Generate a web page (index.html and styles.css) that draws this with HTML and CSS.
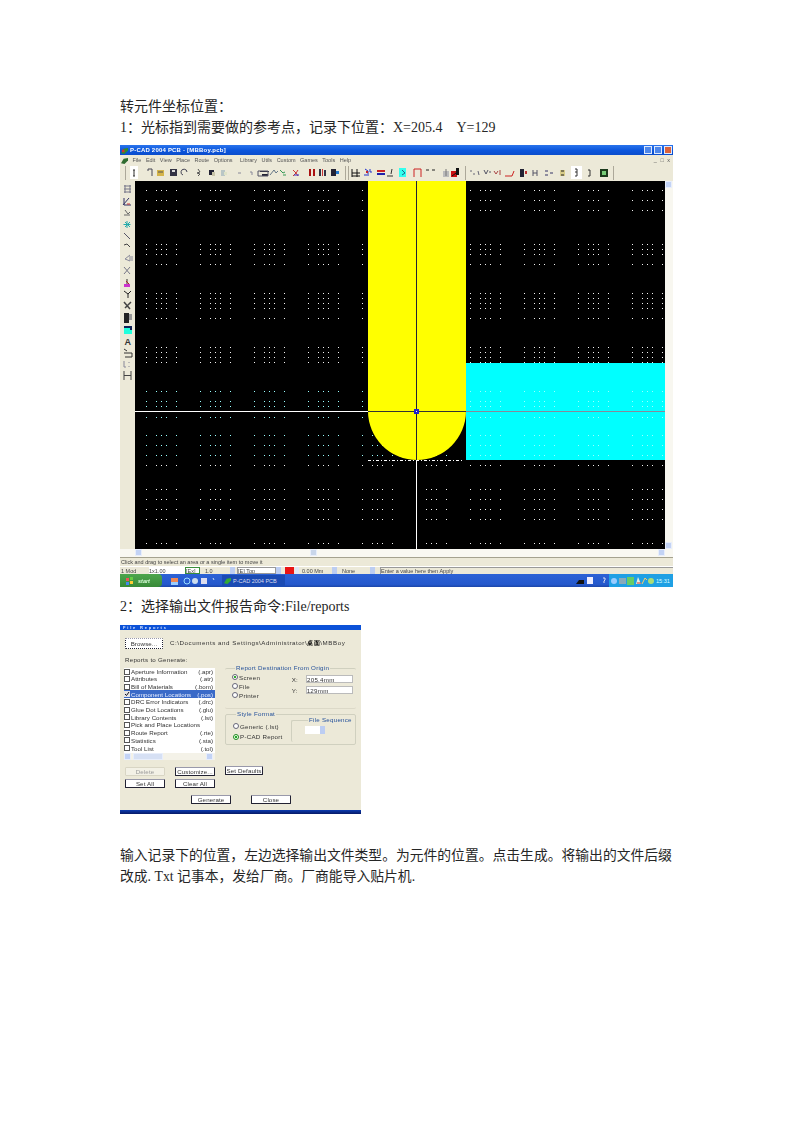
FILE: index.html
```html
<!DOCTYPE html>
<html lang="zh">
<head>
<meta charset="utf-8">
<title>转元件坐标位置</title>
<link rel="stylesheet" href="styles.css">
</head>
<body>
<main class="page">
  <p class="line">转元件坐标位置：</p>
  <p class="line">1：光标指到需要做的参考点，记录下位置：X=205.4&nbsp;&nbsp;&nbsp;&nbsp;Y=129</p>

  <section class="shot">
    <div class="titlebar">
      <svg class="appicon" viewBox="0 0 8 8"><path d="M0 7L3 2L8 1V4L4 8Z" fill="#2e8b2e"/><path d="M1 3H4V6H1Z" fill="#c33"/></svg>
      <span class="titletext">P-CAD 2004 PCB - [MBBoy.pcb]</span>
      <span class="winbtns"><i class="wb"></i><i class="wb"></i><i class="wb wb-close"></i></span>
    </div>
    <div class="menubar">
      <svg class="appicon" viewBox="0 0 8 8"><path d="M0 7L3 2L8 1V4L4 8Z" fill="#2e6b2e"/></svg>
      <span>File</span><span>Edit</span><span>View</span><span>Place</span><span>Route</span><span>Options</span><span class="menu-gap">Library</span><span>Utils</span><span>Custom</span><span>Games</span><span>Tools</span><span>Help</span>
      <span class="menu-right">_ &#9633; x</span>
    </div>
    <svg class="toolbar" viewBox="120 165 553 16">
      <path d="M125.500 166V180M345.500 166V180M348.500 166V180M465.500 166V180M613.500 166V180" stroke="#aca899"/>
      <rect x="130" y="166" width="8" height="13" fill="#fff"/>
      <rect x="571" y="166" width="11" height="13" fill="#fff"/>
      <path d="M133 170h2M134 170v6M133 176h2" stroke="#333" fill="none"/>
      <path d="M575 169h2v3h-2M577 172v4h-2M588 170h2v6h-2" stroke="#333" fill="none"/>
      <path d="M148 169h4v7M148 169v2" stroke="#445" fill="none"/>
      <path d="M157 170h7v6h-7z" fill="#d4b44a"/><path d="M158 172h5" stroke="#555"/>
      <path d="M170 169h7v7h-7z" fill="#334"/><path d="M172 170h3v2h-3z" fill="#ddd"/>
      <path d="M183 175a3 3 0 1 1 4-3" stroke="#445" fill="none"/>
      <path d="M198 169l2 3l-3 1l3 1l-2 2" stroke="#555" fill="none"/>
      <path d="M209 170h5v5h-5z" fill="#223"/><path d="M212 172h3v4h-3z" fill="#c8c4a8"/>
      <path d="M221 170h4v6h-4z" fill="#b9c6c6"/><path d="M224 172h3v3h-3z" fill="#dfe3c8"/>
      <path d="M238 173h3M250 172h2v3" stroke="#889" fill="none"/>
      <path d="M260 171h9v1h-9zM262 174h6v2h-6z" fill="#223"/><path d="M258 171h10v5h-10z" fill="none" stroke="#556"/>
      <path d="M270 175l4-5l2 3l2-2" stroke="#678" fill="none"/>
      <path d="M280 170l3 3l2-1M283 175h3" stroke="#395" fill="none"/>
      <path d="M293 170l3 3l-3 3M298 170l-2 3l2 3" stroke="#c33" fill="none"/><path d="M294 175h5" stroke="#33c"/>
      <path d="M309 169h2v7h-2zM313 169h2v7h-2z" fill="#a11"/>
      <path d="M319 169h2v7h-2zM324 170h2v6h-2z" fill="#334"/><path d="M322 169h1v7h-1z" fill="#c33"/>
      <path d="M331 169h5v7h-5z" fill="#223"/><path d="M336 171h3v3h-3z" fill="#27c"/>
      <path d="M352 169v8M352 173h8M357 169v8M352 176h8" stroke="#111" fill="none"/>
      <path d="M365 169l3 2v3M370 169v3h2M364 175h5" stroke="#23c" fill="none"/><path d="M366 171h2v2h-2z" fill="#c22"/>
      <path d="M377 170h8v2h-8z" fill="#c22"/><path d="M377 173h8v2h-8z" fill="#22a"/>
      <path d="M392 169l-1 5M387 176h6" stroke="#333" fill="none"/>
      <rect x="399" y="168" width="7" height="9" fill="#3fe"/><path d="M402 170l3 3l-3 2" stroke="#268" fill="none"/>
      <path d="M414 169h7v8M414 169v8" stroke="#c22" fill="none"/>
      <path d="M426 170h3M432 170h3" stroke="#222" fill="none"/>
      <path d="M443 171h6v6h-6z" fill="#bbb"/><path d="M446 169v7" stroke="#777"/>
      <path d="M451 171h6v6h-6z" fill="#c11"/><path d="M456 168h3v7h-3z" fill="#111"/><path d="M452 176l4-3" stroke="#111"/>
      <path d="M471 170v2M474 173v2M478 171l1 4" stroke="#667" fill="none"/>
      <path d="M484 170l2 4l2-4M489 172h2" stroke="#556" fill="none"/>
      <path d="M494 171l2 3l2-3M500 170v5" stroke="#a44" fill="none"/>
      <path d="M505 176h7l2-5" stroke="#c22" fill="none"/>
      <path d="M520 169h4v8h-4z" fill="#223"/><path d="M525 171h2v3h-2z" fill="#b33"/>
      <path d="M533 170v6M537 170v6M533 173h4" stroke="#556" fill="none"/>
      <path d="M545 171h3M545 175h3M550 173h3" stroke="#336" fill="none"/>
      <path d="M560 170h5v6h-5z" fill="#d8cc88"/><path d="M561 171h3M561 175h3" stroke="#222"/>
      <path d="M600 169h8v8h-8z" fill="#1c3a1c"/><path d="M602 171h4v4h-4z" fill="#7c7"/>
    </svg>
    <div class="work">
      <svg class="sidebar" viewBox="120 181 15 368">
        <path d="M124 186h7M124 189h7M124 192h7M125 185v8M130 185v8" stroke="#778" fill="none"/>
        <path d="M123 205l6-7M124 198v7h7" stroke="#336" fill="none"/><path d="M127 204h3" stroke="#c33"/>
        <path d="M125 210l3 4l2-2M124 215h6" stroke="#666" fill="none"/>
        <path d="M127 221v7M123.500 224.500h7M125 222l5 5M130 222l-5 5" stroke="#2aa" fill="none"/>
        <path d="M124 233l6 6" stroke="#556"/>
        <path d="M124 245l3-1l3 3" stroke="#444" fill="none"/>
        <path d="M130 255l-5 4l5 2v-5M132 256v5" stroke="#889" fill="none"/>
        <path d="M124 267l6 7M130 267l-6 7" stroke="#778" fill="none"/>
        <path d="M127 279v5" stroke="#333"/><path d="M124 284h6v3h-6z" fill="#c3c"/><path d="M126 281l3 3" stroke="#a22"/>
        <path d="M124 291l4 3l3-3M128 294v4" stroke="#222" fill="none"/>
        <path d="M124 302l6 7M125 308l6-6" stroke="#444" fill="none" stroke-width="1.500"/>
        <path d="M124 313h5v10h-5z" fill="#222"/><path d="M129 314h3v6h-3z" fill="#999"/>
        <path d="M124 326h8v8h-8z" fill="#2fd"/><path d="M124 326h8v2h-8zM130 326h2v4h-2z" fill="#125"/>
        <text class="side-a" x="124.500" y="345">A</text>
        <path d="M124 349l3 2M124 353h8v4h-7" stroke="#333" fill="none"/>
        <path d="M124 361v6h2M129 362v1M129 366v1" stroke="#889" fill="none"/>
        <path d="M124 371v9M131 371v9M124 375.500h7" stroke="#444" fill="none"/>
      </svg>
      <svg class="canvas" viewBox="0 0 530 368">
        <rect width="530" height="368" fill="#000"/>
        <g class="dots">
          <path d="M11 9.500H530M11 19.500H530M11 29.500H530M11 63.500H530M11 68.500H530M11 73.500H530M11 83.500H530M11 112.500H530M11 117.500H530M11 122.500H530M11 127.500H530M11 137.500H530M11 166.500H530M11 171.500H530M11 176.500H530M11 181.500H530M11 210.500H530M11 220.500H530M11 225.500H530M11 236.500H530M11 254.500H530M11 264.500H530M11 274.500H530M11 284.500H530M11 308.500H530M11 318.500H530M11 328.500H530M11 338.500H530M11 362.500H530"/>
        </g>
        <rect x="331" y="182" width="199" height="97" fill="#0ff"/>
        <g class="dots dots-faint">
          <path d="M11 210.500H530M11 220.500H530M11 225.500H530M11 236.500H530M11 254.500H530M11 264.500H530M11 274.500H530"/>
        </g>
        <path d="M233 0H331V230A49 49 0 0 1 233 230Z" fill="#ff0"/>
        <path class="edge" d="M233 279.500H329"/>
        <path d="M0 230.500H233" stroke="#fff"/>
        <path d="M233 230.500H331" stroke="#333"/>
        <path d="M331 230.500H530" stroke="#889"/>
        <path d="M281.500 0V279" stroke="#223"/>
        <path d="M281.500 279V368" stroke="#fff"/>
        <rect x="279" y="228" width="5" height="5" fill="#22c"/>
        <rect x="281" y="230" width="1" height="1" fill="#fff"/>
      </svg>
      <div class="vscroll"><i class="sb"></i><i class="sb"></i></div>
    </div>
    <div class="hscroll"><i class="sb"></i><i class="sb sb-mid"></i><i class="sb sb-end"></i></div>
    <div class="statusbar"><span>Click and drag to select an area or a single item to move it</span></div>
    <div class="propbar">
      <span class="pf pf-a">1 Mod</span>
      <span class="pf pf-b">1x1.00</span>
      <span class="pf pf-c">[Ex]</span>
      <span class="pf pf-d">1.0</span><i class="combo"></i>
      <span class="pf pf-e">[E] Top</span><i class="combo"></i>
      <i class="swatch"></i><i class="spin"></i>
      <span class="pf pf-f">0.00 Mm</span><i class="combo"></i>
      <span class="pf pf-g">None</span><i class="combo"></i>
      <span class="pf pf-h">Enter a value here then Apply</span>
    </div>
    <div class="taskbar">
      <span class="start"><svg class="flag" viewBox="0 0 8 8"><path d="M0 1h3v3H0z" fill="#e55"/><path d="M4 0h3v3H4z" fill="#6c4"/><path d="M0 5h3v3H0z" fill="#48e"/><path d="M4 4h3v3H4z" fill="#fc3"/></svg>start</span>
      <svg class="quick" viewBox="0 0 50 12">
        <rect x="2" y="3" width="7" height="4" fill="#e85"/><rect x="2" y="7" width="7" height="3" fill="#9cf"/>
        <circle cx="18" cy="6" r="3" fill="none" stroke="#9df"/><circle cx="26" cy="6" r="3" fill="#cde"/>
        <rect x="32" y="3" width="6" height="6" fill="#dde"/><path d="M44 3l1 2" stroke="#cde"/>
      </svg>
      <span class="task"><svg class="appicon" viewBox="0 0 8 8"><path d="M0 7L3 2L8 1V4L4 8Z" fill="#3a3"/></svg>P-CAD 2004 PCB</span>
      <span class="tray-icons">
        <svg class="trayleft" viewBox="0 0 30 12"><path d="M0 9l3-4h5v4z" fill="#111"/><rect x="11" y="2" width="6" height="7" fill="#eef"/><path d="M27 3h2v2l-1 1v2" stroke="#dde" fill="none"/></svg>
      </span>
      <span class="tray">
        <svg class="trayicons" viewBox="0 0 44 12"><circle cx="4" cy="6" r="3" fill="#9cf"/><rect x="9" y="3" width="7" height="6" fill="#8ab"/><rect x="17" y="2" width="7" height="8" fill="#6c6"/><path d="M26 9l2-7l3 7z" fill="#eed"/><path d="M27 8h4" stroke="#c33"/><path d="M32 9l3-6l2 2" stroke="#fc6" fill="none"/><circle cx="41" cy="6" r="3" fill="#ad7"/></svg>
        <span class="clock">15:31</span>
      </span>
    </div>
  </section>

  <p class="line line-caption">2：选择输出文件报告命令:File/reports</p>

  <section class="dialog">
    <div class="dlg-title">File Reports</div>
    <div class="dlg-top">
      <span class="btn btn-browse">Browse...</span>
      <span class="dlg-path">C:\Documents and Settings\Administrator\<b class="dark">桌面</b>\MBBoy</span>
    </div>
    <div class="dlg-main">
      <div class="dlg-left">
        <div class="dlg-label">Reports to Generate:</div>
        <div class="listbox">
          <div class="li"><i class="cb"></i><span>Aperture Information</span><b>(.apr)</b></div>
          <div class="li"><i class="cb"></i><span>Attributes</span><b>(.atr)</b></div>
          <div class="li"><i class="cb"></i><span>Bill of Materials</span><b>(.bom)</b></div>
          <div class="li li-on"><svg class="cb cb-on" viewBox="0 0 6 6"><path d="M1 3l1.500 1.500L5 1" stroke="#112" fill="none"/></svg><span>Component Locations</span><b>(.pos)</b></div>
          <div class="li"><i class="cb"></i><span>DRC Error Indicators</span><b>(.drc)</b></div>
          <div class="li"><i class="cb"></i><span>Glue Dot Locations</span><b>(.glu)</b></div>
          <div class="li"><i class="cb"></i><span>Library Contents</span><b>(.lst)</b></div>
          <div class="li"><i class="cb"></i><span>Pick and Place Locations</span><b></b></div>
          <div class="li"><i class="cb"></i><span>Route Report</span><b>(.rte)</b></div>
          <div class="li"><i class="cb"></i><span>Statistics</span><b>(.sta)</b></div>
          <div class="li"><i class="cb"></i><span>Tool List</span><b>(.tol)</b></div>
          <div class="list-scroll"><i class="sb"></i><i class="sb sb-thumb"></i><i class="sb sb-end"></i></div>
        </div>
      </div>
      <div class="dlg-right">
        <fieldset class="grp grp-dest">
          <legend>Report Destination  From Origin</legend>
          <div class="radios">
            <label class="rd"><i class="radio radio-on"></i>Screen</label>
            <label class="rd"><i class="radio"></i>File</label>
            <label class="rd"><i class="radio"></i>Printer</label>
          </div>
          <div class="coords">
            <label class="co">X:<span class="input">205.4mm</span></label>
            <label class="co">Y:<span class="input">129mm</span></label>
          </div>
        </fieldset>
        <fieldset class="grp grp-style">
          <legend>Style Format</legend>
          <div class="radios radios-wide">
            <label class="rd"><i class="radio"></i>Generic (.lst)</label>
            <label class="rd"><i class="radio radio-green"></i>P-CAD Report</label>
          </div>
          <fieldset class="grp grp-seq">
            <legend>File Sequence</legend>
            <span class="seqbox"><i class="combo"></i></span>
          </fieldset>
        </fieldset>
      </div>
    </div>
    <div class="dlg-buttons">
      <span class="btn btn-off">Delete</span>
      <span class="btn">Customize...</span>
      <span class="btn btn-up">Set Defaults</span>
      <span class="btn">Set All</span>
      <span class="btn">Clear All</span>
    </div>
    <div class="dlg-actions">
      <span class="btn">Generate</span>
      <span class="btn">Close</span>
    </div>
    <div class="dlg-edge"></div>
  </section>

  <p class="line line-para">输入记录下的位置，左边选择输出文件类型。为元件的位置。点击生成。将输出的文件后缀改成. Txt 记事本，发给厂商。厂商能导入贴片机.</p>
</main>
</body>
</html>
```
FILE: styles.css
```css
* { box-sizing: border-box; }
html, body { margin: 0; padding: 0; background: #fff; }
.page { padding: 96px 120px 0; width: 793px; font-family: "Liberation Serif", "Noto Sans CJK SC", serif; color: #262626; }
.line { margin: 0; font-size: 14px; line-height: 21px; }
.line-caption { margin: 9px 0 8px; }
.line-para { margin-top: 31px; font-size: 13.8px; }

/* Screenshot window */
.shot { margin-top: 7px; width: 553px; height: 442px; display: flex; flex-direction: column; background: #ece9d8; font-family: "Liberation Sans", sans-serif; font-size: 5.5px; overflow: hidden; }
.titlebar { height: 10px; flex: none; display: flex; align-items: center; padding-left: 1px; gap: 2px; background: linear-gradient(#2a74ec, #0b55dc 55%, #0a4ccc); color: #fff; font-weight: bold; font-size: 6px; letter-spacing: .2px; }
.titletext { filter: blur(.35px); }
.appicon { width: 7px; height: 7px; flex: none; }
.winbtns { margin-left: auto; display: flex; gap: 2px; padding-right: 1px; }
.wb { width: 8px; height: 8px; background: #4d86ea; border: 1px solid #dfe9fb; display: block; }
.wb-close { background: #d9623c; }
.menubar { height: 10px; flex: none; display: flex; align-items: center; gap: 4.500px; padding-left: 1px; background: #ece9d8; color: #555; filter: blur(.4px); }
.menu-gap { margin-left: 3px; }
.menu-right { margin-left: auto; padding-right: 2px; letter-spacing: 1px; }
.toolbar { display: block; width: 553px; height: 16px; flex: none; background: #ece9d8; }
.work { display: flex; height: 368px; flex: none; }
.sidebar { display: block; width: 15px; height: 368px; flex: none; background: #ece9d8; }
.side-a { font: bold 9px "Liberation Sans", sans-serif; fill: #333; }
.canvas { display: block; width: 530px; height: 368px; flex: none; }
.dots path { stroke: #f2f2f2; stroke-width: 1; fill: none; stroke-dasharray: 1 9 1 4 1 4 1 9 1 23; }
.dots-faint path { stroke: #9ff; }
.edge { stroke: #fff; stroke-width: 1; fill: none; stroke-dasharray: 3 2 1 2; }
.vscroll { width: 8px; flex: none; background: #f8f7f0; display: flex; flex-direction: column; justify-content: space-between; }
.sb { display: block; width: 7px; height: 7px; background: #c3d3f5; border: 1px solid #e8eefb; flex: none; }
.hscroll { height: 8px; flex: none; background: #f9f8f2; display: flex; padding: 0 8px 0 15px; }
.sb-mid { background: #c9d6ea; margin-left: 168px; }
.sb-end { margin-left: auto; }
.statusbar { height: 9px; flex: none; padding: 1px 0 0 1px; border-top: 1px solid #a5a28f; color: #444; line-height: 7px; filter: blur(.4px); }
.propbar { height: 8px; flex: none; display: flex; align-items: stretch; color: #444; line-height: 8px; border-top: 1px solid #fff; }
.pf { display: block; overflow: hidden; white-space: nowrap; filter: blur(.35px); }
.pf-a { width: 29px; padding-left: 1px; }
.pf-b { width: 36px; background: #fff; }
.pf-c { width: 15px; background: #fff; border: 1px solid #3a8f3a; line-height: 6px; }
.pf-d { width: 30px; padding-left: 5px; }
.pf-e { width: 39px; background: #fff; border: 1px solid #999; line-height: 6px; margin-left: 2px; }
.pf-f { width: 33px; padding-left: 3px; }
.pf-g { width: 33px; padding-left: 5px; }
.pf-h { flex: 1; margin-left: 5px; border-left: 1px solid #999; border-top: 1px solid #999; line-height: 6px; }
.combo { display: block; width: 5px; background: #bccdf2; flex: none; }
.swatch { display: block; width: 9px; background: #e91414; margin-left: 4px; flex: none; }
.spin { display: block; width: 4px; background: #dfe6f5; margin-left: 1px; flex: none; }
.taskbar { height: 13px; flex: none; display: flex; align-items: center; background: linear-gradient(#2c62d6, #2458cc 80%, #1c46a8); color: #fff; margin-top: auto; }
.start { width: 42px; height: 13px; display: flex; align-items: center; gap: 4px; padding-left: 6px; background: linear-gradient(#4da64d, #388a38); color: #dfd; font-style: italic; font-weight: bold; border-radius: 0 4px 4px 0; filter: blur(.3px); }
.flag { width: 8px; height: 8px; }
.quick { width: 50px; height: 12px; margin-left: 7px; flex: none; }
.task { width: 63px; height: 12px; margin-left: 3px; display: flex; align-items: center; gap: 2px; padding-left: 2px; background: #1b4bb4; color: #dde; white-space: nowrap; overflow: hidden; }
.tray-icons { margin-left: auto; display: flex; }
.trayleft { width: 30px; height: 12px; display: block; margin-right: 3px; }
.tray { width: 64px; height: 13px; display: flex; align-items: center; background: #1fa0e4; padding-left: 1px; }
.trayicons { width: 44px; height: 12px; flex: none; }
.clock { margin-left: 2px; color: #dff; white-space: nowrap; }

/* Dialog */
.dialog { width: 241px; height: 189px; background: #ece9d8; display: flex; flex-direction: column; font-family: "Liberation Sans", sans-serif; font-size: 6.2px; letter-spacing: .25px; color: #333; overflow: hidden; }
.dialog > * { filter: blur(.35px); }
.dlg-title { height: 5px; flex: none; background: #0c52d8; color: #dfe8ff; font-weight: bold; font-size: 4px; letter-spacing: 1.800px; line-height: 5px; padding-left: 3px; }
.dlg-top { height: 19px; flex: none; display: flex; align-items: center; gap: 7px; padding: 7px 0 0 5px; }
.dlg-path { white-space: nowrap; letter-spacing: .55px; }
.dark { color: #000; font-weight: bold; }
.btn { display: flex; align-items: center; justify-content: center; width: 40px; height: 9px; background: #fff; border: 1px solid #223; border-top-color: #99a; border-radius: 1px; white-space: nowrap; letter-spacing: .1px; }
.btn-browse { width: 38px; height: 11px; border-style: dotted; flex: none; }
.btn-off { color: #999; border-color: #d8d5c4; background: #f3f1e6; }
.dlg-main { flex: none; height: 117px; display: flex; padding-left: 4px; gap: 10px; }
.dlg-left { width: 91px; flex: none; }
.dlg-label { height: 9px; line-height: 9px; padding-left: 1px; margin-top: 6px; }
.listbox { margin-top: 4px; height: 92px; background: #fff; display: flex; flex-direction: column; position: relative; overflow: hidden; }
.li { height: 7.700px; flex: none; display: flex; align-items: center; gap: 1px; padding-right: 2px; white-space: nowrap; line-height: 7px; letter-spacing: 0; }
.li:first-child { height: 7px; }
.li span { flex: 1; min-width: 0; }
.li b { font-weight: normal; }
.li-on { background: #3a6ac8; color: #e8eeff; }
.cb { display: block; width: 6px; height: 6px; background: #fff; border: 1px solid #555; flex: none; }
.cb-on { background: #e4e4e4; border: 0; }
.list-scroll { position: absolute; left: 0; right: 0; bottom: 0; height: 7px; display: flex; gap: 2px; background: #f4f2e8; padding-right: 2px; }
.sb-thumb { width: 30px; background: #d6e0f4; }
.dlg-right { width: 131px; flex: none; padding-top: 16px; }
.grp { margin: 0; padding: 0; border: 1px solid #d0d0bf; border-radius: 2px; min-width: 0; }
.grp legend { color: #23509a; padding: 0 1px; margin-left: 3px; line-height: 6px; white-space: nowrap; }
.grp-dest { height: 44px; display: flex; padding: 3px 3px 3px 7px; border-left: 0; border-right: 0; border-bottom-color: #dcd9c8; justify-content: space-between; }
.radios { display: flex; flex-direction: column; gap: 2.500px; }
.radios-wide { width: 58px; gap: 4px; padding-top: 6px; }
.rd { display: flex; align-items: center; gap: 1px; height: 6.500px; white-space: nowrap; }
.radio { display: block; width: 6px; height: 6px; border-radius: 50%; background: #fff; border: 1px solid #667; flex: none; }
.radio-on { background: radial-gradient(#3a3 35%, #fff 45%); }
.radio-green { background: radial-gradient(#2a2 35%, #efe 45%); border-color: #282; }
.coords { display: flex; flex-direction: column; gap: 3px; padding-top: 1px; }
.co { display: flex; gap: 8px; align-items: center; }
.input { display: block; width: 47px; height: 8px; line-height: 7px; background: #fff; border: 1px solid #bbb; }
.grp-style { height: 34px; margin-top: 2px; display: flex; padding: 0 3px 0 7px; }
.grp-seq { width: 52px; height: 25px; padding: 3px 0 0 13px; border-right: 0; border-bottom: 0; }
.seqbox { display: flex; width: 20px; height: 8px; background: #fff; justify-content: flex-end; }
.dlg-buttons { flex: none; display: grid; grid-template-columns: 40px 40px 38px; grid-auto-rows: 9px; column-gap: 10px; row-gap: 3px; padding-left: 5px; margin-top: 1px; }
.btn-up { margin-top: -1px; width: 38px; }
.dlg-actions { flex: none; display: flex; gap: 20px; justify-content: center; margin-top: 7px; margin-left: 1px; }
.dlg-edge { margin-top: auto; height: 4px; flex: none; background: linear-gradient(#0c3cb0, #061a66); filter: none; }
```
